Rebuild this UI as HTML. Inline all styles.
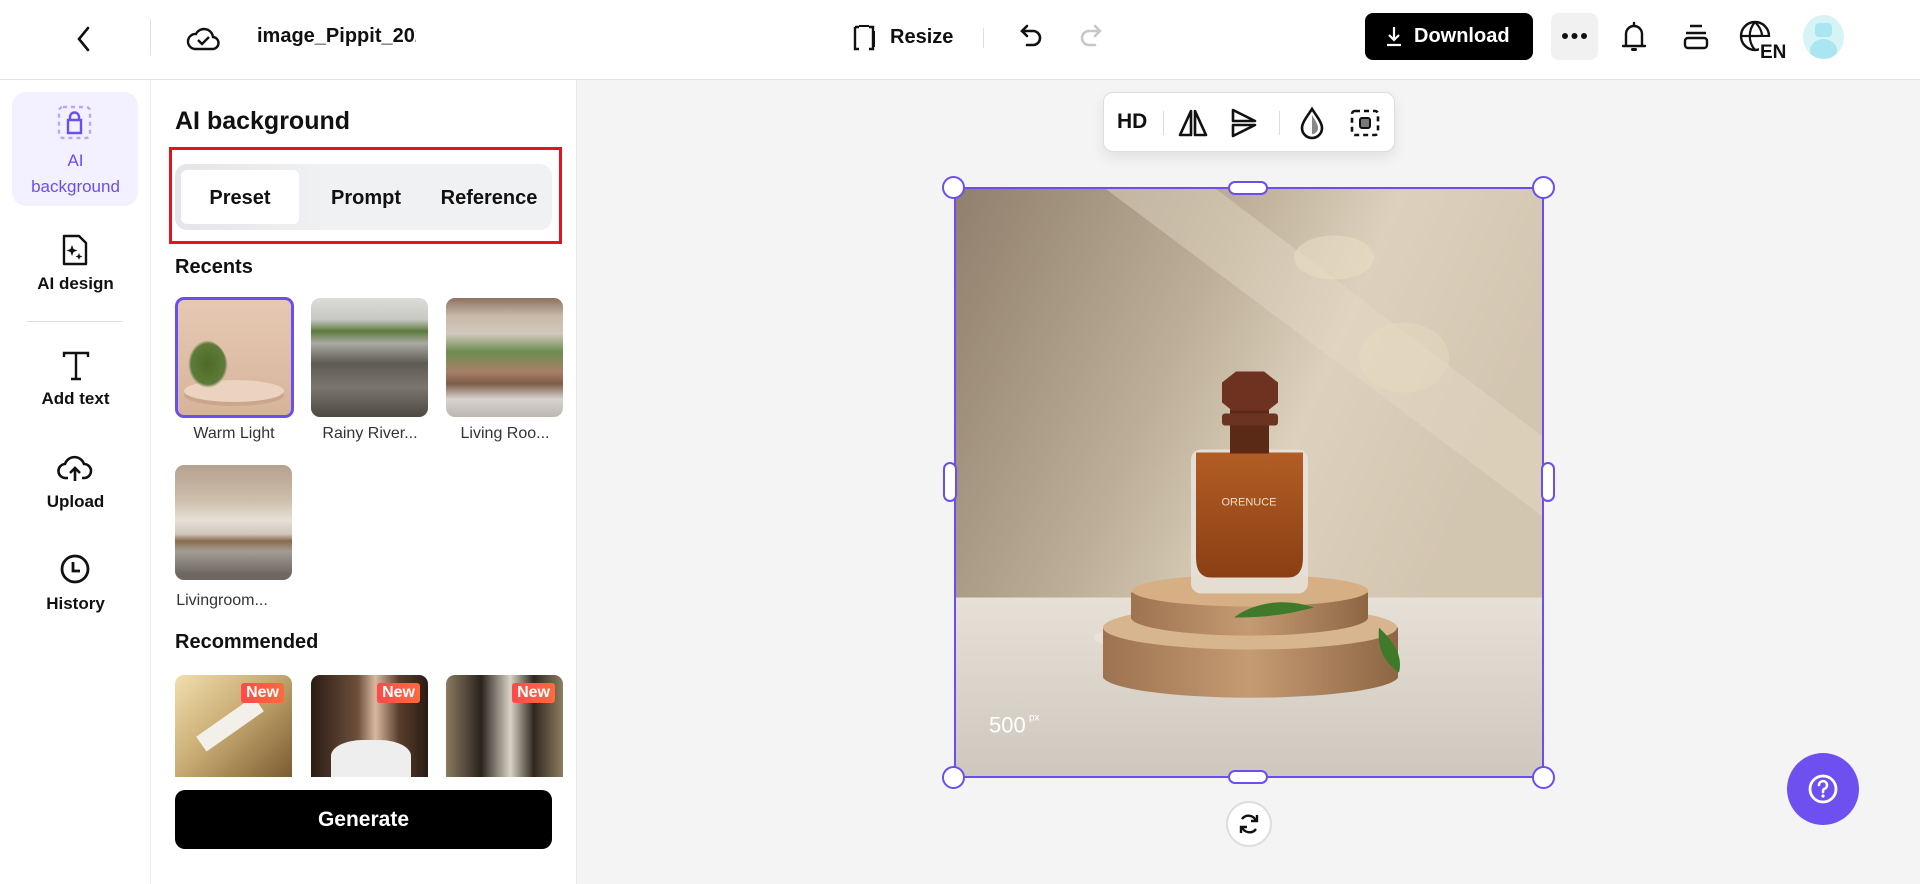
<!DOCTYPE html>
<html><head><meta charset="utf-8"><style>
*{box-sizing:border-box;margin:0;padding:0}
body{width:1920px;height:884px;overflow:hidden;font-family:"Liberation Sans",sans-serif;background:#fff;position:relative;color:#111}
.abs{position:absolute}
.hdr{position:absolute;left:0;top:0;width:1920px;height:80px;border-bottom:1px solid #e4e4e4;background:#fff}
.rail{position:absolute;left:0;top:80px;width:151px;height:804px;border-right:1px solid #ececec}
.panel{position:absolute;left:151px;top:80px;width:426px;height:804px;border-right:1px solid #e8e8e8;background:#fff}
.canvas{position:absolute;left:577px;top:80px;width:1343px;height:804px;background:#f4f4f4}
.ri{position:absolute;left:0;width:151px;text-align:center;font-size:17px;font-weight:bold}
.thumb{position:absolute;width:117px;border-radius:9px;overflow:hidden}
.lbl{position:absolute;font-size:16px;color:#333;width:130px;text-align:center}
.new{position:absolute;right:8px;top:8px;background:linear-gradient(90deg,#ff4a4a,#ff6a3d);color:#fff;font-weight:bold;font-size:16px;padding:1px 5px;border-radius:3px}
.hd{position:absolute;background:#fff;border:2px solid #6b4ef0}
</style></head><body>
<div class="hdr">
 <svg class="abs" style="left:74px;top:25px" width="20" height="28" viewBox="0 0 20 28"><path d="M14 3L5 14l9 11" fill="none" stroke="#111" stroke-width="2.6" stroke-linecap="round"/></svg>
 <div class="abs" style="left:150px;top:19px;width:1px;height:36px;background:#e2e2e2"></div>
 <svg class="abs" style="left:185px;top:21px" width="36" height="32" viewBox="0 0 36 32"><path d="M10 28h17a6 6 0 0 0 1-12 9 9 0 0 0-17-3A7 7 0 0 0 10 28z" fill="none" stroke="#111" stroke-width="2.4"/><path d="M13 19l4 4 7-7" fill="none" stroke="#111" stroke-width="2.4"/></svg>
 <div class="abs" style="left:257px;top:25px;width:159px;overflow:hidden;white-space:nowrap;font-size:20px;font-weight:bold">image_Pippit_2025</div>
 <svg class="abs" style="left:849px;top:23px" width="30" height="30" viewBox="0 0 30 30"><path d="M6 4v22h4M6 4h4M20 26h4V4h-4" fill="none" stroke="#111" stroke-width="2.4"/><path d="M10 3h10M25 8v16" stroke="#111" stroke-width="2"/></svg>
 <div class="abs" style="left:890px;top:26px;font-size:20px;font-weight:bold">Resize</div>
 <div class="abs" style="left:983px;top:28px;width:1px;height:20px;background:#ddd"></div>
 <svg class="abs" style="left:1018px;top:22px" width="28" height="30" viewBox="0 0 28 30"><path d="M9 4L4 9l5 5M4 9h11a7 7 0 0 1 0 14h-6" fill="none" stroke="#111" stroke-width="2.6" stroke-linecap="round"/></svg>
 <svg class="abs" style="left:1076px;top:22px" width="28" height="30" viewBox="0 0 28 30"><path d="M19 4l5 5-5 5M24 9H13a7 7 0 0 0 0 14h6" fill="none" stroke="#c8c8c8" stroke-width="2.6" stroke-linecap="round"/></svg>
 <div class="abs" style="left:1365px;top:13px;width:168px;height:47px;background:#000;border-radius:8px;color:#fff;font-size:20px;font-weight:bold;line-height:47px;padding-left:49px">Download</div>
 <svg class="abs" style="left:1384px;top:25px" width="20" height="22" viewBox="0 0 20 22"><path d="M10 2v13M5 10l5 5 5-5M3 20h14" fill="none" stroke="#fff" stroke-width="2.2"/></svg>
 <div class="abs" style="left:1551px;top:13px;width:47px;height:47px;background:#f1f1f1;border-radius:8px"></div>
 <svg class="abs" style="left:1561px;top:32px" width="27" height="8" viewBox="0 0 27 8"><circle cx="4" cy="4" r="3" fill="#111"/><circle cx="13.5" cy="4" r="3" fill="#111"/><circle cx="23" cy="4" r="3" fill="#111"/></svg>
 <svg class="abs" style="left:1619px;top:20px" width="30" height="34" viewBox="0 0 30 34"><path d="M7 25V14a8 8 0 0 1 16 0v11M4 26h22M15 3v3" fill="none" stroke="#111" stroke-width="2.4" stroke-linecap="round"/><rect x="12" y="28" width="6" height="3" rx="1.5" fill="#111"/></svg>
 <svg class="abs" style="left:1681px;top:22px" width="30" height="30" viewBox="0 0 30 30"><path d="M9 4h12M5 11h20" stroke="#111" stroke-width="2.4"/><rect x="4" y="16" width="22" height="10" rx="3" fill="none" stroke="#111" stroke-width="2.4"/></svg>
 <svg class="abs" style="left:1738px;top:19px" width="50" height="42" viewBox="0 0 50 42"><circle cx="17" cy="17" r="14" fill="none" stroke="#111" stroke-width="2.4"/><path d="M3 17h28M17 3c-7 8-7 20 0 28M17 3c5 5 7 10 7 14" fill="none" stroke="#111" stroke-width="2.2"/><rect x="21" y="18" width="29" height="24" fill="#fff"/><text x="22" y="39" font-family="Liberation Sans" font-weight="bold" font-size="19" fill="#111">EN</text></svg>
 <div class="abs" style="left:1803px;top:15px;width:41px;height:44px;border-radius:50%;background:#d6f3f6;overflow:hidden"><div class="abs" style="left:12px;top:8px;width:17px;height:14px;border-radius:4px;background:#a9e6ef"></div><div class="abs" style="left:7px;top:24px;width:27px;height:24px;border-radius:50%;background:#a9e6ef"></div></div>
</div>

<div class="rail">
 <div class="abs" style="left:12px;top:12px;width:126px;height:114px;border-radius:14px;background:#f3f0ff"></div>
 <svg class="abs" style="left:57px;top:25px" width="36" height="36" viewBox="0 0 36 36"><rect x="2" y="2" width="31" height="31" rx="4" fill="none" stroke="#b9a9f8" stroke-width="2.4" stroke-dasharray="4 4"/><path d="M11 28V15h13v13zM13 15v-3a4.5 4.5 0 0 1 9 0v3" fill="none" stroke="#6b4ef0" stroke-width="2.4"/></svg>
 <div class="ri" style="top:68px;color:#6b4ef0;font-weight:normal;line-height:26px">AI<br>background</div>
 <svg class="abs" style="left:59px;top:153px" width="32" height="34" viewBox="0 0 32 34"><path d="M5 3h15l7 7v21H5z" fill="none" stroke="#111" stroke-width="2.4" stroke-linejoin="round"/><path d="M13 12l1.5 4 4 1.5-4 1.5-1.5 4-1.5-4-4-1.5 4-1.5zM20 20l1 2.5 2.5 1-2.5 1-1 2.5-1-2.5-2.5-1 2.5-1z" fill="#111"/></svg>
 <div class="ri" style="top:194px">AI design</div>
 <div class="abs" style="left:27px;top:241px;width:95px;height:1px;background:#ddd"></div>
 <svg class="abs" style="left:61px;top:270px" width="30" height="32" viewBox="0 0 30 32"><path d="M3 7V3h24v4M15 3v26M10 29h10" fill="none" stroke="#111" stroke-width="2.4"/></svg>
 <div class="ri" style="top:309px">Add text</div>
 <svg class="abs" style="left:57px;top:372px" width="36" height="32" viewBox="0 0 36 32"><path d="M11 26H9a7 7 0 0 1-1-14 10 10 0 0 1 19 0 7 7 0 0 1 0 14h-2" fill="none" stroke="#111" stroke-width="2.6"/><path d="M18 29V16M13 21l5-5 5 5" fill="none" stroke="#111" stroke-width="2.6"/></svg>
 <div class="ri" style="top:412px">Upload</div>
 <svg class="abs" style="left:59px;top:473px" width="32" height="32" viewBox="0 0 32 32"><circle cx="16" cy="16" r="13" fill="none" stroke="#111" stroke-width="2.8"/><path d="M14 9v9h7" fill="none" stroke="#111" stroke-width="2.8"/></svg>
 <div class="ri" style="top:514px">History</div>
</div>

<div class="panel">
 <div class="abs" style="left:24px;top:27px;font-size:25px;font-weight:bold">AI background</div>
 <div class="abs" style="left:18px;top:67px;width:393px;height:97px;border:3px solid #e3141e"></div>
 <div class="abs" style="left:24px;top:84px;width:377px;height:66px;border-radius:12px;background:linear-gradient(90deg,#e4e5e8,#f0f1f3 40%)"></div>
 <div class="abs" style="left:30px;top:90px;width:118px;height:54px;border-radius:6px;background:#fff"></div>
 <div class="abs" style="left:30px;top:107px;width:118px;text-align:center;font-size:20px;font-weight:bold">Preset</div>
 <div class="abs" style="left:160px;top:107px;width:110px;text-align:center;font-size:20px;font-weight:bold">Prompt</div>
 <div class="abs" style="left:280px;top:107px;width:116px;text-align:center;font-size:20px;font-weight:bold">Reference</div>
 <div class="abs" style="left:24px;top:176px;font-size:20px;font-weight:bold">Recents</div>

 <div class="thumb" style="left:24px;top:217px;width:119px;height:121px;border:3px solid #6b4ef0;background:linear-gradient(180deg,#e6c9b3,#d6b49c)"><div class="abs" style="left:6px;top:80px;width:100px;height:22px;border-radius:50%;background:#ecd3bf;box-shadow:0 4px 0 #c9a68c"></div><div class="abs" style="left:10px;top:40px;width:40px;height:48px;border-radius:40% 60% 30% 50%;background:radial-gradient(#4d6a25,#5e7b3a 60%,transparent 70%)"></div></div>
 <div class="lbl" style="left:18px;top:345px">Warm Light</div>
 <div class="thumb" style="left:160px;top:218px;height:119px;background:linear-gradient(180deg,#dcdcd8 0,#c7c9c4 18%,#5d7a3d 28%,#a9aaa4 38%,#5e5a52 55%,#7b766d 75%,#4d4842)"></div>
 <div class="lbl" style="left:154px;top:345px">Rainy River...</div>
 <div class="thumb" style="left:295px;top:218px;height:119px;background:linear-gradient(180deg,#8d7360 0,#c9b8a8 15%,#d0c9bd 30%,#6e8d4f 45%,#a98068 62%,#7d5c49 72%,#d8d3ce 85%,#bdb7b0)"></div>
 <div class="lbl" style="left:289px;top:345px">Living Roo...</div>
 <div class="thumb" style="left:24px;top:385px;height:115px;background:linear-gradient(180deg,#b5a190 0,#cdbdaa 30%,#e6e0d8 48%,#cfc6bc 60%,#8a6a4c 66%,#a39d95 75%,#6e6760 95%)"></div>
 <div class="lbl" style="left:6px;top:512px;width:130px">Livingroom...</div>
 <div class="abs" style="left:24px;top:551px;font-size:20px;font-weight:bold">Recommended</div>
 <div class="thumb" style="left:24px;top:595px;height:102px;border-radius:9px 9px 0 0;background:linear-gradient(135deg,#f1dfb0,#c9ac73 45%,#7b5b31)"><div class="abs" style="left:20px;top:40px;width:70px;height:18px;background:#f3f0ea;transform:rotate(-35deg)"></div><div class="new">New</div></div>
 <div class="thumb" style="left:160px;top:595px;height:102px;border-radius:9px 9px 0 0;background:linear-gradient(90deg,#2a1c14,#6e4f3b 40%,#d8b8a0 55%,#5a3e2c 75%,#2a1c14)"><div class="abs" style="left:20px;top:65px;width:80px;height:40px;border-radius:40% 40% 0 0;background:#eee"></div><div class="new">New</div></div>
 <div class="thumb" style="left:295px;top:595px;height:102px;border-radius:9px 9px 0 0;background:linear-gradient(90deg,#8c7a62,#2a241d 30%,#d9d2c6 55%,#2f281f 75%,#8f7d63)"><div class="new">New</div></div>
 <div class="abs" style="left:24px;top:710px;width:377px;height:59px;border-radius:10px;background:#000;color:#fff;font-size:21px;font-weight:bold;text-align:center;line-height:59px">Generate</div>
</div>

<div class="canvas">
 <div class="abs" style="left:526px;top:12px;width:292px;height:60px;background:#fff;border:1px solid #ddd;border-radius:10px;box-shadow:0 6px 14px rgba(0,0,0,.08)">
  <div class="abs" style="left:13px;top:17px;font-size:21px;font-weight:bold">HD</div>
  <div class="abs" style="left:59px;top:18px;width:1px;height:24px;background:#ddd"></div>
  <svg class="abs" style="left:72px;top:15px" width="34" height="30" viewBox="0 0 34 30"><path d="M15 3L4 27h11zM19 3l11 24H19z" fill="none" stroke="#111" stroke-width="2.6" stroke-linejoin="round"/></svg>
  <svg class="abs" style="left:125px;top:14px" width="30" height="32" viewBox="0 0 30 32"><path d="M4 3l22 11H4zM4 18h22L4 29z" fill="none" stroke="#111" stroke-width="2.6" stroke-linejoin="round"/></svg>
  <div class="abs" style="left:175px;top:18px;width:1px;height:24px;background:#ddd"></div>
  <svg class="abs" style="left:193px;top:13px" width="30" height="34" viewBox="0 0 30 34"><path d="M15 3C9 12 5 17 5 22a10 10 0 0 0 20 0c0-5-4-10-10-19z" fill="none" stroke="#111" stroke-width="2.6"/><path d="M15 9c3 5 6 9 6 13a6 6 0 0 1-6 6z" fill="#888"/></svg>
  <svg class="abs" style="left:245px;top:15px" width="32" height="30" viewBox="0 0 32 30"><rect x="3" y="3" width="26" height="24" rx="3" fill="none" stroke="#111" stroke-width="2.6" stroke-dasharray="5 4"/><rect x="11" y="10" width="10" height="10" rx="2" fill="#777" stroke="#111" stroke-width="2"/></svg>
 </div>
 <svg class="abs" style="left:377px;top:107px" width="590" height="591" viewBox="0 0 590 590">
  <defs>
   <linearGradient id="w" x1="0" y1="0" x2="1" y2="0.3"><stop offset="0" stop-color="#8f7f6c"/><stop offset=".45" stop-color="#bcae98"/><stop offset=".7" stop-color="#ddd1bd"/><stop offset="1" stop-color="#d3c6b1"/></linearGradient>
   <linearGradient id="f" x1="0" y1="0" x2="0" y2="1"><stop offset="0" stop-color="#e6e0d6"/><stop offset="1" stop-color="#cdc7be"/></linearGradient>
   <linearGradient id="b" x1="0" y1="0" x2="0" y2="1"><stop offset="0" stop-color="#b35d24"/><stop offset="1" stop-color="#8a3f14"/></linearGradient>
   <linearGradient id="wd" x1="0" y1="0" x2="1" y2="0"><stop offset="0" stop-color="#9d7350"/><stop offset=".5" stop-color="#c49b72"/><stop offset="1" stop-color="#8e6644"/></linearGradient>
  </defs>
  <rect width="590" height="410" fill="url(#w)"/>
  <rect y="410" width="590" height="180" fill="url(#f)"/>
  <path d="M150 0L590 330V250L260 0z" fill="#e4d9c6" opacity=".45"/>
  <ellipse cx="380" cy="70" rx="40" ry="22" fill="#e8dcc3" opacity=".6"/>
  <ellipse cx="450" cy="170" rx="45" ry="35" fill="#e6d9c0" opacity=".55"/>
  <ellipse cx="200" cy="450" rx="60" ry="12" fill="#eee6d8" opacity=".7"/>
  <path d="M149 440v50a148 22 0 0 0 295 0v-50z" fill="url(#wd)"/>
  <ellipse cx="296" cy="440" rx="147" ry="22" fill="#d7b68f"/>
  <path d="M177 405v25a118 18 0 0 0 237 0v-25z" fill="url(#wd)"/>
  <ellipse cx="296" cy="403" rx="118" ry="16" fill="#d6b084"/>
  <path d="M280 430c20-15 50-20 80-10-20 5-40 10-80 10zM425 440c10 10 25 25 20 45-15-10-22-25-20-45z" fill="#3f7a2a"/>
  <rect x="237" y="262" width="117" height="144" rx="10" fill="#e7e1da" opacity=".9"/>
  <path d="M242 265h107v105q0 20-15 20h-77q-15 0-15-20z" fill="url(#b)"/>
  <rect x="276" y="222" width="39" height="44" fill="#5b2a16"/>
  <rect x="268" y="226" width="56" height="12" rx="3" fill="#6b3420"/>
  <path d="M268 195l14-11h28l14 11v20l-10 8h-36l-10-8z" fill="#6e3220"/>
  <text x="295" y="318" font-family="Liberation Sans" font-size="11" fill="#f3dcc6" text-anchor="middle">ORENUCE</text>
  <text x="35" y="545" font-family="Liberation Sans" font-size="22" fill="#fff">500</text><text x="75" y="533" font-family="Liberation Sans" font-size="10" fill="#fff">px</text>
 </svg>
 <div class="abs" style="left:377px;top:107px;width:590px;height:591px;border:2px solid #6b4ef0"></div>
 <div class="hd" style="left:365px;top:96px;width:23px;height:23px;border-radius:50%"></div>
 <div class="hd" style="left:955px;top:96px;width:23px;height:23px;border-radius:50%"></div>
 <div class="hd" style="left:365px;top:686px;width:23px;height:23px;border-radius:50%"></div>
 <div class="hd" style="left:955px;top:686px;width:23px;height:23px;border-radius:50%"></div>
 <div class="hd" style="left:651px;top:101px;width:40px;height:14px;border-radius:7px"></div>
 <div class="hd" style="left:651px;top:690px;width:40px;height:14px;border-radius:7px"></div>
 <div class="hd" style="left:366px;top:382px;width:14px;height:40px;border-radius:7px"></div>
 <div class="hd" style="left:964px;top:382px;width:14px;height:40px;border-radius:7px"></div>
 <div class="abs" style="left:649px;top:721px;width:46px;height:46px;border-radius:50%;background:#fff;border:2px solid #ddd"></div>
 <svg class="abs" style="left:660px;top:732px" width="24" height="24" viewBox="0 0 24 24"><path d="M19 9a8 8 0 0 0-14-2M5 15a8 8 0 0 0 14 2" fill="none" stroke="#111" stroke-width="2.4"/><path d="M20 3v6h-6M4 21v-6h6" fill="none" stroke="#111" stroke-width="2.4"/></svg>
 <div class="abs" style="left:1210px;top:673px;width:72px;height:72px;border-radius:50%;background:#6e4ff0"></div>
 <svg class="abs" style="left:1228px;top:691px" width="36" height="36" viewBox="0 0 36 36"><circle cx="18" cy="18" r="13" fill="none" stroke="#fff" stroke-width="2.8"/><path d="M14 14a4 4 0 1 1 5 4c-1 .5-1 1.5-1 3" fill="none" stroke="#fff" stroke-width="2.6" stroke-linecap="round"/><circle cx="18" cy="25" r="1.6" fill="#fff"/></svg>
</div>
</body></html>
